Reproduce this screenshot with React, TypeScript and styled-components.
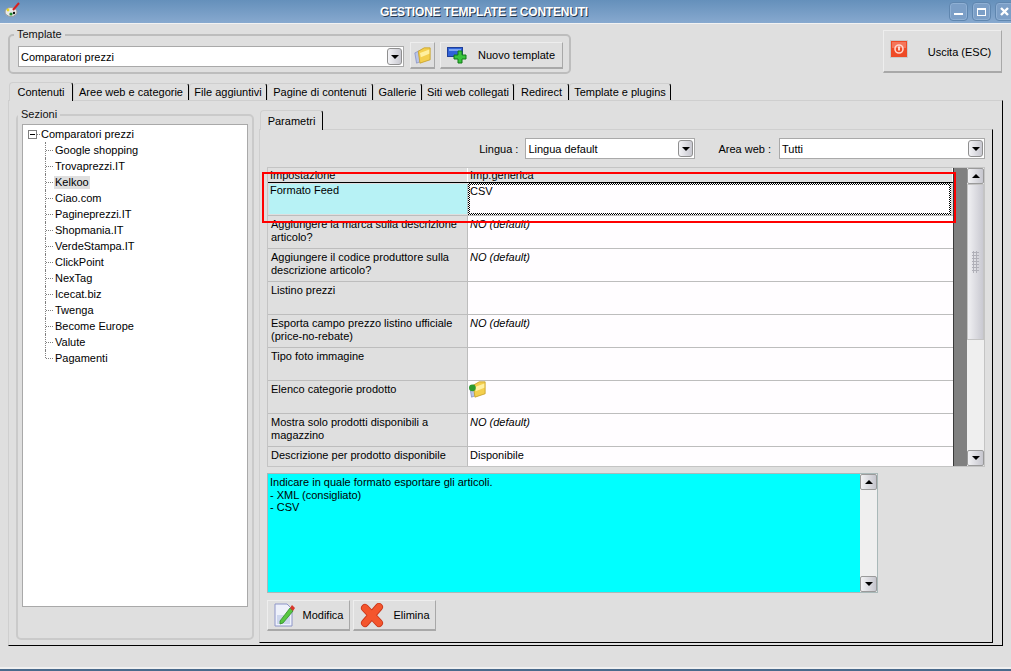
import React from 'react';
import styled, { createGlobalStyle } from 'styled-components';

const GlobalStyle = createGlobalStyle`
  html, body { margin: 0; padding: 0; background: #dfdfdf; }
  body { font-family: "Liberation Sans", Arial, sans-serif; font-size: 11px; color: #000; }
  * { box-sizing: border-box; }
`;

const Window = styled.div`
  width: 1011px;
  height: 671px;
  display: flex;
  flex-direction: column;
  background: #dfdfdf;
  overflow: hidden;
`;

const TitleBar = styled.header`
  height: 24px;
  flex: none;
  position: relative;
  display: flex;
  align-items: center;
  justify-content: flex-end;
  gap: 4px;
  padding-bottom: 1px;
  background: linear-gradient(#6590bb, #87a9cf);
  border-bottom: 1px solid #f2f2f2;
`;

const AppIcon = styled.svg`
  position: absolute;
  left: 4px;
  top: 2px;
`;

const TitleText = styled.div`
  position: absolute;
  left: 380px;
  top: 5px;
  font-size: 12px;
  font-weight: 700;
  letter-spacing: -0.2px;
  color: #fff;
  text-shadow: 1px 1px 0 #26384e;
  white-space: nowrap;
`;

const WinButton = styled.div`
  width: 19px;
  height: 19px;
  border: 1px solid #5f86af;
  border-radius: 4px;
  background: #7c9fc7;
  box-shadow: inset 0 0 0 1px #8fb0d4;
  display: flex;
  align-items: center;
  justify-content: center;
  &:last-child { margin-right: -3px; }
`;

const TopRow = styled.section`
  height: 58px;
  flex: none;
  display: flex;
  align-items: flex-start;
  justify-content: space-between;
  padding: 4px 9px 0 8px;
`;

const Group = styled.fieldset<{ $w: number; $h: number }>`
  width: ${p => p.$w}px;
  height: ${p => p.$h}px;
  margin: 0;
  padding: 0 0 0 8px;
  border: 2px solid #bdbdbd;
  border-radius: 5px;
  min-width: 0;
`;

const GroupLegend = styled.legend`
  padding: 0 3px;
  margin-left: -4px;
  font-size: 11px;
  line-height: 13px;
  color: #111;
`;

const TemplateRow = styled.div`
  display: flex;
  align-items: center;
  margin-top: 1px;
  height: 27px;
`;

const Combo = styled.div<{ $w: number }>`
  width: ${p => p.$w}px;
  height: 21px;
  flex: none;
  display: flex;
  align-items: center;
  justify-content: space-between;
  padding: 0 1px 0 2px;
  background: #fff;
  border: 1px solid #a9a9a9;
  white-space: nowrap;
`;

const TemplateCombo = styled(Combo)`
  margin-top: 2px;
`;

const ArrowBox = styled.span`
  width: 15px;
  height: 17px;
  flex: none;
  display: flex;
  align-items: center;
  justify-content: center;
  background: linear-gradient(90deg, #f3f3f6, #c8c8d0);
  border: 1px solid #8f8f8f;
  border-radius: 3px;
`;

const ArrowUp = styled.span`
  width: 0;
  height: 0;
  border-left: 4px solid transparent;
  border-right: 4px solid transparent;
  border-bottom: 4px solid #000;
`;

const ArrowDown = styled.span`
  width: 0;
  height: 0;
  border-left: 4px solid transparent;
  border-right: 4px solid transparent;
  border-top: 4px solid #000;
`;

const Button = styled.button<{ $w: number; $h: number }>`
  width: ${p => p.$w}px;
  height: ${p => p.$h}px;
  flex: none;
  display: flex;
  align-items: center;
  padding: 0 0 0 6px;
  font: inherit;
  color: #000;
  background: #dfdfdf;
  border: 1px solid #eeeeee;
  border-right: 1px solid #a8a8a8;
  border-bottom: 2px solid #a8a8a8;
`;

const FolderButton = styled(Button)`
  margin-left: 6px;
  padding-left: 3px;
`;

const NewButton = styled(Button)`
  margin-left: 5px;
`;

const ExitButton = styled(Button)`
  margin-top: 2px;
  padding-bottom: 5px;
`;

const ButtonLabel = styled.span<{ $shift?: number }>`
  flex: 1;
  text-align: center;
  white-space: nowrap;
  padding-left: ${p => p.$shift ?? 0}px;
`;

const ExitLabel = styled(ButtonLabel)`
  padding-top: 7px;
`;

const TabStrip = styled.nav`
  height: 18px;
  flex: none;
  display: flex;
  padding-left: 9px;
`;

const Tab = styled.div<{ $w: number; $active?: boolean }>`
  width: ${p => p.$w}px;
  flex: none;
  display: flex;
  align-items: center;
  justify-content: center;
  white-space: nowrap;
  border-top: 1px solid #cfcfcf;
  border-left: 1px solid #cfcfcf;
  border-right: 1px solid #000;
  border-radius: 4px 3px 0 0;
  margin-top: ${p => (p.$active ? 0 : 1)}px;
  margin-bottom: ${p => (p.$active ? -1 : 0)}px;
  background: #dfdfdf;
  position: relative;
  z-index: ${p => (p.$active ? 1 : 0)};
`;

const MainPanel = styled.main`
  width: 995px;
  height: 546px;
  flex: none;
  margin-left: 8px;
  display: flex;
  gap: 5px;
  padding: 7px 0 0 7px;
  border-top: 1px solid #cfcfcf;
  border-left: 1px solid #cfcfcf;
  border-right: 1px solid #000;
  border-bottom: 1px solid #000;
`;

const SectionsBox = styled(Group)`
  padding: 3px 4px 0 4px;
  flex: none;
  border-color: #cacaca;
`;

const Tree = styled.div`
  width: 226px;
  height: 483px;
  background: #fff;
  border: 1px solid #a9a9a9;
  padding: 1px 0 0 5px;
`;

const RootNode = styled.div`
  height: 16px;
  display: flex;
  align-items: center;
  white-space: nowrap;
`;

const Expander = styled.span`
  width: 9px;
  height: 9px;
  flex: none;
  border: 1px solid #7f7f7f;
  position: relative;
  &::after {
    content: '';
    position: absolute;
    left: 1px;
    right: 1px;
    top: 3px;
    height: 1px;
    background: #000;
  }
`;

const RootDots = styled.span`
  width: 3px;
  margin-right: 0;
  border-top: 1px dotted #808080;
`;

const ChildNode = styled.div<{ $last?: boolean }>`
  height: 16px;
  margin-left: 17px;
  padding-left: 9px;
  display: flex;
  align-items: center;
  white-space: nowrap;
  position: relative;
  &::before {
    content: '';
    position: absolute;
    left: 0;
    top: 0;
    height: ${p => (p.$last ? 8 : 16)}px;
    border-left: 1px dotted #808080;
  }
  &::after {
    content: '';
    position: absolute;
    left: 1px;
    top: 8px;
    width: 7px;
    border-top: 1px dotted #808080;
  }
`;

const NodeLabel = styled.span<{ $selected?: boolean }>`
  padding: 0 1px;
  line-height: 13px;
  background: ${p => (p.$selected ? '#dfdfdf' : 'transparent')};
`;

const RightColumn = styled.div`
  width: 734px;
  flex: none;
  height: 533px;
  margin-top: 2px;
  display: flex;
  flex-direction: column;
`;

const SubTabs = styled.div`
  height: 19px;
  flex: none;
  display: flex;
  padding-left: 1px;
`;

const SubPanel = styled.div`
  flex: 1;
  padding: 8px 0 0 7px;
  border-top: 1px solid #cfcfcf;
  border-left: 1px solid #cfcfcf;
  border-right: 1px solid #000;
  border-bottom: 1px solid #000;
`;

const FilterRow = styled.div`
  width: 718px;
  height: 21px;
  display: flex;
  align-items: center;
  justify-content: flex-end;
`;

const FilterLabel = styled.span<{ $after: number }>`
  margin-right: ${p => p.$after}px;
  white-space: nowrap;
`;

const FilterGap = styled.span`
  width: 23px;
`;

const GridWrap = styled.div`
  width: 718px;
  height: 300px;
  margin-top: 8px;
  display: flex;
  position: relative;
  border: 1px solid #c4c4c4;
`;

const GridBody = styled.div`
  width: 685px;
  height: 298px;
  overflow: hidden;
  flex: none;
`;

const GridRow = styled.div<{ $h: number }>`
  height: ${p => p.$h}px;
  display: grid;
  grid-template-columns: 200px 1fr;
  border-bottom: 1px solid #bdbdbd;
`;

const HeadRow = styled(GridRow)`
  border-bottom: 1px solid #000;
`;

const LabelCell = styled.div`
  padding: 2px 3px;
  line-height: 13px;
  background: #dfdfdf;
  border-right: 1px solid #bdbdbd;
`;

const CurrentLabelCell = styled.div`
  margin: 1px 0 1px 1px;
  padding: 0 1px;
  line-height: 13px;
  background: #b7f2f5;
  border-right: 1px solid #b7c7c8;
`;

const ValueCell = styled.div<{ $italic?: boolean }>`
  padding: 2px 2px;
  line-height: 13px;
  background: #fffdff;
  font-style: ${p => (p.$italic ? 'italic' : 'normal')};
`;

const HeadCell = styled.div`
  padding: 1px 3px 0 2px;
  line-height: 13px;
  background: #dfdfdf;
  border-right: 1px solid #fff;
`;

const FocusCell = styled.div`
  padding: 2px;
  margin-right: 2px;
  background: repeating-conic-gradient(#000 0 25%, #fff 0 50%) 0 0 / 2px 2px;
`;

const FocusInner = styled.div`
  height: 100%;
  line-height: 13px;
  background: #fffdff;
`;

const CellIcon = styled.span`
  display: block;
  margin: -2px 0 0 -1px;
  height: 17px;
`;

const Gutter = styled.div`
  width: 14px;
  flex: none;
  background: #808080;
  border-left: 1px solid #3a3a3a;
`;

const ScrollBar = styled.div<{ $w: number }>`
  width: ${p => p.$w}px;
  flex: none;
  display: flex;
  flex-direction: column;
  background: #efefef;
`;

const ScrollButton = styled.div`
  height: 16px;
  flex: none;
  display: flex;
  align-items: center;
  justify-content: center;
  background: linear-gradient(90deg, #f2f2f4, #c6c6ce);
  border: 1px solid #9a9a9a;
  border-radius: 2px;
`;

const ScrollThumb = styled.div`
  height: 156px;
  flex: none;
  display: flex;
  align-items: center;
  justify-content: center;
  background: linear-gradient(90deg, #f0f0f3, #c9c9d1);
  border: 1px solid #c4c4c4;
`;

const ScrollTrack = styled.div`
  flex: 1;
`;

const Grip = styled.div`
  width: 7px;
  height: 22px;
  background: radial-gradient(circle, #b0b0b8 1px, transparent 1.2px) 0 0 / 3px 3px;
`;

const RedMark = styled.div`
  position: absolute;
  left: -6px;
  top: 4px;
  width: 694px;
  height: 51px;
  border: 2px solid #ff0000;
  pointer-events: none;
`;

const HelpBox = styled.div`
  width: 611px;
  height: 120px;
  margin-top: 6px;
  display: flex;
  justify-content: space-between;
  background: #00ffff;
  border: 1px solid #a9b9b9;
`;

const HelpText = styled.div`
  padding: 2px 2px;
  line-height: 12.5px;
  white-space: pre-line;
`;

const ActionRow = styled.div`
  display: flex;
  gap: 3px;
  margin-top: 7px;
`;

const BottomEdge = styled.footer`
  flex: 1;
  display: flex;
  flex-direction: column;
  justify-content: flex-end;
`;

const BottomLine = styled.div`
  height: 4px;
  border-top: 2px solid #f0f0f0;
  background: #4a6a8c;
`;

const FolderIcon = ({ size = 19, badge = false }: { size?: number; badge?: boolean }) => (
  <svg width={size} height={size} viewBox="0 0 20 20">
    <path d="M1 7 L7 4 L8 17 L3 19 Z" fill="#b9c4e8" stroke="#8d96c8" />
    <path d="M5 5 L12 1 L19 1 L19 15 L7 19 Z" fill="#f4cf4e" stroke="#c8a22a" />
    <path d="M7 7 L18 3 L18 8 L8 12 Z" fill="#fff0a0" />
    {badge && <circle cx="4" cy="8" r="4" fill="#2d9a2d" />}
  </svg>
);

const NewTemplateIcon = () => (
  <svg width="20" height="18" viewBox="0 0 20 18">
    <rect x="0.5" y="1.5" width="15" height="9" fill="#2f62d8" stroke="#1f3f99" />
    <rect x="2" y="3" width="12" height="2" fill="#7ba4f0" />
    <path d="M11 5 H15 V9 H19 V13 H15 V17 H11 V13 H7 V9 H11 Z" fill="#39c43c" stroke="#137a17" />
  </svg>
);

const PowerIcon = () => (
  <svg width="18" height="18" viewBox="0 0 18 18">
    <rect x="0.5" y="0.5" width="17" height="17" fill="#ee4a26" stroke="#c9c9c9" />
    <rect x="2" y="2" width="14" height="6" fill="#f4765a" />
    <circle cx="9" cy="9" r="4" fill="none" stroke="#ffd6cc" strokeWidth="1.6" />
    <path d="M9 6.5 V10.5" stroke="#ffffff" strokeWidth="1.6" />
  </svg>
);

const EditIcon = () => (
  <svg width="21" height="24" viewBox="0 0 21 24">
    <path d="M1 1 H13 L18 6 V23 H1 Z" fill="#eef1fb" stroke="#8e96c8" />
    <rect x="3" y="12" width="13" height="9" fill="#cdd6ee" />
    <path d="M6 18 L16 5 L19 8 L9 20 L6 21 Z" fill="#57c743" stroke="#2e8a28" strokeWidth="0.8" />
    <path d="M16 5 L18 2 L21 5 L19 8 Z" fill="#d8382a" />
  </svg>
);

const DeleteIcon = () => (
  <svg width="24" height="25" viewBox="0 0 24 25">
    <path d="M5 5 L19 20 M19 4 L5 20" stroke="#c8361a" strokeWidth="8" strokeLinecap="round" />
    <path d="M5 5 L19 20 M19 4 L5 20" stroke="#f4552d" strokeWidth="6.4" strokeLinecap="round" />
  </svg>
);

const sections = [
  'Google shopping', 'Trovaprezzi.IT', 'Kelkoo', 'Ciao.com', 'Pagineprezzi.IT', 'Shopmania.IT',
  'VerdeStampa.IT', 'ClickPoint', 'NexTag', 'Icecat.biz', 'Twenga', 'Become Europe', 'Valute', 'Pagamenti',
];

const tabs: [string, number][] = [
  ['Contenuti', 64], ['Aree web e categorie', 116], ['File aggiuntivi', 78], ['Pagine di contenuti', 106],
  ['Gallerie', 49], ['Siti web collegati', 92], ['Redirect', 55], ['Template e plugins', 102],
];

const rows: { label: React.ReactNode; value?: string; icon?: boolean; h: number }[] = [
  { label: <>Aggiungere la marca sulla descrizione<br />articolo?</>, value: 'NO (default)', h: 33 },
  { label: <>Aggiungere il codice produttore sulla<br />descrizione articolo?</>, value: 'NO (default)', h: 33 },
  { label: 'Listino prezzi', h: 33 },
  { label: <>Esporta campo prezzo listino ufficiale<br />(price-no-rebate)</>, value: 'NO (default)', h: 33 },
  { label: 'Tipo foto immagine', h: 33 },
  { label: 'Elenco categorie prodotto', icon: true, h: 33 },
  { label: <>Mostra solo prodotti disponibili a<br />magazzino</>, value: 'NO (default)', h: 33 },
];

const App: React.FC = () => {
  return (
    <Window>
      <GlobalStyle />
      <TitleBar>
        <AppIcon width="16" height="16" viewBox="0 0 16 16">
          <ellipse cx="7" cy="10" rx="6" ry="4.5" fill="#e8e8e8" stroke="#9a9a9a" />
          <path d="M9 8 L15 1" stroke="#d82020" strokeWidth="2" />
          <circle cx="4" cy="8" r="1.4" fill="#e8d820" />
          <circle cx="7" cy="12" r="1.6" fill="#1c8a2c" />
          <circle cx="10" cy="11" r="1.2" fill="#111" />
        </AppIcon>
        <TitleText>GESTIONE TEMPLATE E CONTENUTI</TitleText>
        <WinButton>
          <svg width="11" height="11" viewBox="0 0 11 11"><rect x="1" y="7" width="9" height="2" fill="#fff" /></svg>
        </WinButton>
        <WinButton>
          <svg width="11" height="11" viewBox="0 0 11 11"><rect x="1.5" y="2.5" width="8" height="7" fill="none" stroke="#fff" /><rect x="1" y="2" width="9" height="2" fill="#fff" /></svg>
        </WinButton>
        <WinButton>
          <svg width="11" height="11" viewBox="0 0 11 11"><path d="M2 2 L9 9 M9 2 L2 9" stroke="#fff" strokeWidth="2.4" /></svg>
        </WinButton>
      </TitleBar>

      <TopRow>
        <Group $w={563} $h={46}>
          <GroupLegend>Template</GroupLegend>
          <TemplateRow>
            <TemplateCombo $w={386}>
              Comparatori prezzi
              <ArrowBox><ArrowDown /></ArrowBox>
            </TemplateCombo>
            <FolderButton $w={25} $h={27}>
              <FolderIcon size={17} />
            </FolderButton>
            <NewButton $w={123} $h={27}>
              <NewTemplateIcon />
              <ButtonLabel $shift={4}>Nuovo template</ButtonLabel>
            </NewButton>
          </TemplateRow>
        </Group>
        <ExitButton $w={119} $h={43}>
          <PowerIcon />
          <ExitLabel $shift={10}>Uscita (ESC)</ExitLabel>
        </ExitButton>
      </TopRow>

      <TabStrip>
        {tabs.map(([name, w], i) => (
          <Tab key={name} $w={w} $active={i === 0}>{name}</Tab>
        ))}
      </TabStrip>

      <MainPanel>
        <SectionsBox as="fieldset" $w={238} $h={532}>
          <GroupLegend>Sezioni</GroupLegend>
          <Tree>
            <RootNode>
              <Expander />
              <RootDots />
              <NodeLabel>Comparatori prezzi</NodeLabel>
            </RootNode>
            {sections.map((s, i) => (
              <ChildNode key={s} $last={i === sections.length - 1}>
                <NodeLabel $selected={s === 'Kelkoo'}>{s}</NodeLabel>
              </ChildNode>
            ))}
          </Tree>
        </SectionsBox>

        <RightColumn>
          <SubTabs>
            <Tab $w={63} $active>Parametri</Tab>
          </SubTabs>
          <SubPanel>
            <FilterRow>
              <FilterLabel $after={7}>Lingua :</FilterLabel>
              <Combo $w={170}>Lingua default<ArrowBox><ArrowDown /></ArrowBox></Combo>
              <FilterGap />
              <FilterLabel $after={8}>Area web :</FilterLabel>
              <Combo $w={206}>Tutti<ArrowBox><ArrowDown /></ArrowBox></Combo>
            </FilterRow>

            <GridWrap>
              <GridBody>
                <HeadRow $h={15}>
                  <HeadCell>Impostazione</HeadCell>
                  <HeadCell>Imp.generica</HeadCell>
                </HeadRow>
                <GridRow $h={33}>
                  <CurrentLabelCell>Formato Feed</CurrentLabelCell>
                  <FocusCell><FocusInner>CSV</FocusInner></FocusCell>
                </GridRow>
                {rows.map((r, i) => (
                  <GridRow key={i} $h={r.h}>
                    <LabelCell>{r.label}</LabelCell>
                    <ValueCell $italic={!!r.value}>
                      {r.value}
                      {r.icon && <CellIcon><FolderIcon size={17} badge /></CellIcon>}
                    </ValueCell>
                  </GridRow>
                ))}
                <GridRow $h={21}>
                  <LabelCell>Descrizione per prodotto disponibile</LabelCell>
                  <ValueCell>Disponibile</ValueCell>
                </GridRow>
              </GridBody>
              <Gutter />
              <ScrollBar $w={17}>
                <ScrollButton><ArrowUp /></ScrollButton>
                <ScrollThumb><Grip /></ScrollThumb>
                <ScrollTrack />
                <ScrollButton><ArrowDown /></ScrollButton>
              </ScrollBar>
              <RedMark />
            </GridWrap>

            <HelpBox>
              <HelpText>{'Indicare in quale formato esportare gli articoli.\n- XML (consigliato)\n- CSV'}</HelpText>
              <ScrollBar $w={17}>
                <ScrollButton><ArrowUp /></ScrollButton>
                <ScrollTrack />
                <ScrollButton><ArrowDown /></ScrollButton>
              </ScrollBar>
            </HelpBox>

            <ActionRow>
              <Button $w={83} $h={31}>
                <EditIcon />
                <ButtonLabel $shift={2}>Modifica</ButtonLabel>
              </Button>
              <Button $w={83} $h={31}>
                <DeleteIcon />
                <ButtonLabel $shift={4}>Elimina</ButtonLabel>
              </Button>
            </ActionRow>
          </SubPanel>
        </RightColumn>
      </MainPanel>

      <BottomEdge>
        <BottomLine />
      </BottomEdge>
    </Window>
  );
};

export default App;
